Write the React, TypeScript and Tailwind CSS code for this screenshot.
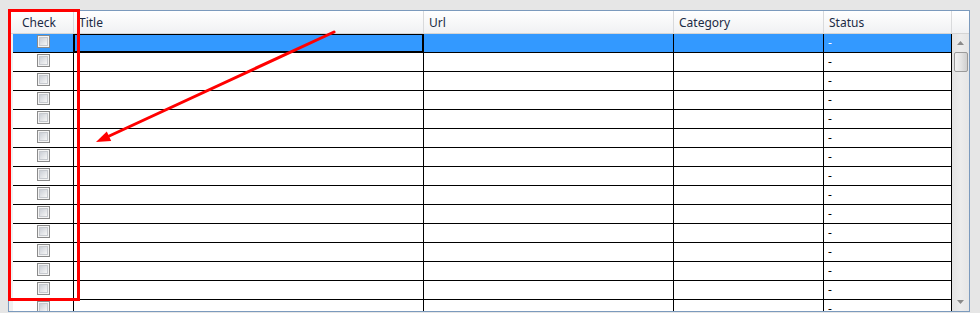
import React from "react";

const COLS = [
  { key: "check", label: "Check", w: "w-[61px]" },
  { key: "title", label: "Title", w: "w-[350px]" },
  { key: "url", label: "Url", w: "w-[250px]" },
  { key: "category", label: "Category", w: "w-[150px]" },
  { key: "status", label: "Status", w: "w-[128px]" },
];

function CheckBox() {
  return (
    <div className="w-[13px] h-[13px] border border-[#8a8a8a] bg-[#f4f4f4] p-px">
      <div className="w-full h-full border border-[#c6c9ce] bg-gradient-to-br from-[#cbcfd6] to-[#f6f6f6]" />
    </div>
  );
}

function Row({ selected }: { selected: boolean }) {
  const bg = selected ? "bg-[#3399ff]" : "bg-white";
  return (
    <div className="flex h-[19px] shrink-0">
      <div className="w-[4px] bg-[#f1f1f1]" />
      <div className={`w-[61px] border-r border-b border-black ${bg} flex justify-center items-start pt-px`}>
        <CheckBox />
      </div>
      <div className={`relative w-[350px] border-r border-b border-black ${bg}`}>
        {selected && <div className="absolute inset-0 border border-black" />}
      </div>
      <div className={`w-[250px] border-r border-b border-black ${bg}`} />
      <div className={`w-[150px] border-r border-b border-black ${bg}`} />
      <div
        className={`w-[128px] border-r border-b border-black ${bg} pl-[4px] text-[12px] leading-[18px] ${selected ? "text-white" : "text-black"}`}
      >
        -
      </div>
    </div>
  );
}

export default function App() {
  const rows = Array.from({ length: 15 }, (_, i) => i);
  return (
    <div
      className="relative w-[980px] h-[313px] bg-[#e6e6e6] pt-[10px] pl-[8px] overflow-hidden"
      style={{ fontFamily: '"Noto Sans", "Open Sans", sans-serif' }}
    >
      <div className="w-[962px] h-[302px] border border-[#7b9abd] bg-white flex flex-col overflow-hidden">
        {/* header */}
        <div className="flex h-[23px] shrink-0 border-b border-[#d5d5d5] bg-gradient-to-b from-white to-[#f0f1f3]">
          <div className="w-[4px]" />
          {COLS.map((c) => (
            <div
              key={c.key}
              className={`${c.w} border-r border-[#d9dadc] text-[12px] leading-[23px] text-[#1b2a44] ${
                c.key === "check" ? "text-center pr-[8px]" : "pl-[5px]"
              }`}
            >
              {c.label}
            </div>
          ))}
          <div className="flex-1" />
        </div>
        {/* body */}
        <div className="flex flex-1 overflow-hidden">
          <div className="w-[943px] flex flex-col overflow-hidden">
            {rows.map((i) => (
              <Row key={i} selected={i === 0} />
            ))}
          </div>
          <div className="w-[17px] bg-gradient-to-r from-[#e3e3e3] via-[#ececec] to-[#e6e6e6] flex flex-col items-center">
            <div className="h-[17px] w-full flex items-center justify-center pt-[1px]">
              <svg width="7" height="4" viewBox="0 0 7 4">
                <polygon points="3.5,0 7,4 0,4" fill="#8a8a8a" />
              </svg>
            </div>
            <div className="mt-[1px] w-[14px] h-[20px] rounded-[2px] border border-[#9a9a9a] bg-gradient-to-r from-[#f3f3f3] via-[#e4e4e4] to-[#cfcfcf]" />
            <div className="flex-1" />
            <div className="h-[17px] w-full flex items-center justify-center pb-[1px]">
              <svg width="7" height="4" viewBox="0 0 7 4">
                <polygon points="0,0 7,0 3.5,4" fill="#8a8a8a" />
              </svg>
            </div>
          </div>
        </div>
      </div>

      {/* annotation: red rectangle */}
      <div className="absolute left-[8px] top-[9px] w-[72px] h-[292px] border-[3px] border-[#ff0000]" />

      {/* annotation: red arrow */}
      <svg className="absolute left-0 top-0" width="980" height="313" viewBox="0 0 980 313">
        <line x1="334" y1="32" x2="106" y2="137.5" stroke="#ff0000" strokeWidth="3" strokeLinecap="round" />
        <polygon points="96,142 111.2,141 106.8,131.5" fill="#ff0000" />
      </svg>
    </div>
  );
}
